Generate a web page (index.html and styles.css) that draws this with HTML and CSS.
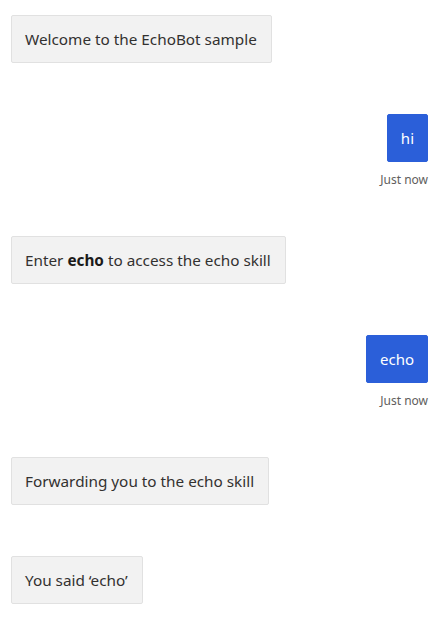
FILE: index.html
```html
<!DOCTYPE html>
<html lang="en">
<head>
    <meta charset="UTF-8">
    <title>EchoBot</title>
    <link rel="stylesheet" href="styles.css">
</head>
<body>
    <div class="transcript">
        <div class="activity from-bot">
            <div class="bubble">Welcome to the EchoBot sample</div>
        </div>

        <div class="activity from-user">
            <div class="bubble">hi</div>
            <div class="timestamp">Just now</div>
        </div>

        <div class="activity from-bot">
            <div class="bubble">Enter <strong>echo</strong> to access the echo skill</div>
        </div>

        <div class="activity from-user">
            <div class="bubble">echo</div>
            <div class="timestamp">Just now</div>
        </div>

        <div class="activity from-bot">
            <div class="bubble">Forwarding you to the echo skill</div>
        </div>

        <div class="activity from-bot">
            <div class="bubble">You said &lsquo;echo&rsquo;</div>
        </div>
    </div>
</body>
</html>
```

FILE: styles.css
```css
/* Global styles */
body {
    margin: 0;
    padding: 0;
    background-color: #fff;
    font-family: "Noto Sans", "Open Sans", sans-serif;
    font-size: 15px;
    color: #323130;
}

/* Transcript */
.transcript {
    display: flex;
    flex-direction: column;
    gap: 51px;
    padding: 15px 13px 0 11px;
}

.activity {
    display: flex;
    flex-direction: column;
}

.from-bot {
    align-items: flex-start;
}

.from-user {
    align-items: flex-end;
}

/* Bubbles */
.bubble {
    padding: 13px 14px 13px 13px;
    line-height: 20px;
    border: 1px solid #e1e1e1;
    border-radius: 2px;
}

.from-bot .bubble {
    font-size: 15.3px;
    background-color: #f2f2f2;
}

.from-user .bubble {
    padding: 13px 13px;
    background-color: #2b5fd9;
    border-color: #2b5fd9;
    color: #fff;
}

.bubble strong {
    font-weight: bold;
    color: #1b1a19;
}

/* Timestamp */
.timestamp {
    margin-top: 10px;
    margin-bottom: -3px;
    font-size: 12px;
    line-height: 16px;
    color: #605e5c;
}
```
